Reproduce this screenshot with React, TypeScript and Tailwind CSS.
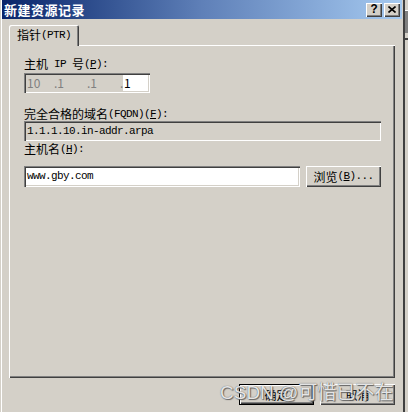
import React from "react";

const ui = { fontFamily: '"Noto Sans CJK SC", "Liberation Sans", sans-serif' };
const mono = { fontFamily: '"Liberation Mono", "Noto Sans CJK SC", monospace' };

// ascii part in a fixed-width face, like the old bitmap font
function A({ children }: { children: React.ReactNode }) {
  return (
    <span style={mono} className="text-[11px] tracking-[-0.6px] leading-none">
      {children}
    </span>
  );
}

function Mn({ c }: { c: string }) {
  // mnemonic letter with underline
  return <span className="underline underline-offset-[1px]">{c}</span>;
}

function Btn({ children, def = false, w = "w-[75px]" }: { children: React.ReactNode; def?: boolean; w?: string }) {
  return (
    <div
      className={
        w +
        " h-[21px] flex items-center justify-center text-[12px] leading-none text-black bg-[#d4d0c8] " +
        (def
          ? "shadow-[inset_1px_1px_0_#000,inset_-1px_-1px_0_#000,inset_2px_2px_0_#fff,inset_-2px_-2px_0_#404040,inset_-3px_-3px_0_#808080]"
          : "shadow-[inset_1px_1px_0_#fff,inset_-1px_-1px_0_#404040,inset_-2px_-2px_0_#808080]")
      }
    >
      {children}
    </div>
  );
}

export default function App() {
  const sunken =
    "shadow-[inset_1px_1px_0_#808080,inset_2px_2px_0_#404040,inset_-1px_-1px_0_#fff,inset_-2px_-2px_0_#d4d0c8]";
  const label = "h-[14px] flex items-center whitespace-nowrap leading-none";

  return (
    <div className="w-[408px] h-[412px] bg-[#d4d0c8] flex overflow-hidden relative" style={ui}>
      {/* Dialog */}
      <div className="w-[402px] h-full flex flex-col pl-[2px] shadow-[inset_1px_0_0_#d4d0c8,inset_2px_0_0_#fff]">
        {/* Title bar */}
        <div className="h-[19px] flex items-center justify-between bg-linear-to-r from-[#0a246a] via-[#5f80b8] to-[#a6caf0] pl-[2px] pr-[2px]">
          <span className="text-white font-bold text-[13px] leading-none tracking-[0.5px]">新建资源记录</span>
          <div className="flex gap-[2px]">
            <div className="w-[16px] h-[14px] flex items-center justify-center bg-[#d4d0c8] shadow-[inset_1px_1px_0_#fff,inset_-1px_-1px_0_#404040,inset_-2px_-2px_0_#808080] text-[12px] font-bold leading-none text-black" style={mono}>
              ?
            </div>
            <div className="w-[16px] h-[14px] flex items-center justify-center bg-[#d4d0c8] shadow-[inset_1px_1px_0_#fff,inset_-1px_-1px_0_#404040,inset_-2px_-2px_0_#808080]">
              <svg width="8" height="7" viewBox="0 0 8 7">
                <path d="M0.5 0.5 L7.5 6.5 M7.5 0.5 L0.5 6.5" stroke="#000" strokeWidth="1.6" />
              </svg>
            </div>
          </div>
        </div>

        {/* Body */}
        <div className="flex-1 flex flex-col px-[7px] pt-[6px]">
          {/* Tab */}
          <div className="relative z-10 w-[70px] h-[21px] bg-[#d4d0c8] rounded-t-[2px] shadow-[inset_1px_1px_0_#fff,inset_-1px_0_0_#404040,inset_-2px_0_0_#808080] flex items-center pl-[8px] pb-[1px] text-[12px] leading-none text-black whitespace-nowrap">
            指针<A>(PTR)</A>
          </div>

          {/* Panel */}
          <div className="-mt-[1px] w-[386px] h-[333px] flex flex-col pl-[15px] pt-[12px] shadow-[inset_1px_1px_0_#fff,inset_-1px_-1px_0_#404040,inset_-2px_-2px_0_#808080] text-[12px] text-black">
            <div className={label}>
              主机<A>&nbsp;IP&nbsp;</A>号<A>(<Mn c="P" />):</A>
            </div>
            <div className={"mt-[2px] w-[126px] h-[20px] bg-[#d4d0c8] flex items-center pl-[3px] pr-[2px] text-[12px] leading-none text-[#808080] " + sunken}>
              <span className="w-[25px]">10</span>
              <span className="w-[33px] pl-[2px]">.1</span>
              <span className="w-[33px] pl-[2px]">.1</span>
              <span className="w-[5px] pl-[2px]">.</span>
              <span className="ml-auto w-[25px] h-[16px] bg-white text-black flex items-center pl-[1px]">1</span>
            </div>

            <div className={"mt-[14px] " + label}>
              完全合格的域名<A>(FQDN)(<Mn c="F" />):</A>
            </div>
            <div className={"w-[357px] h-[20px] bg-[#d4d0c8] flex items-center pl-[3px] text-[11px] tracking-[-0.6px] leading-none " + sunken} style={mono}>
              1.1.1.10.in-addr.arpa
            </div>

            <div className={"mt-[1px] " + label}>
              主机名<A>(<Mn c="H" />):</A>
            </div>
            <div className="mt-[10px] flex gap-[6px]">
              <div className={"w-[276px] h-[21px] bg-white flex items-center pl-[3px] text-[11px] tracking-[-0.6px] leading-none " + sunken} style={mono}>
                www.gby.com
              </div>
              <Btn>
                浏览<A>(<Mn c="B" />)...</A>
              </Btn>
            </div>
          </div>

          {/* Bottom buttons */}
          <div className="mt-[6px] w-[386px] flex justify-end gap-[6px]">
            <Btn def>确定</Btn>
            <Btn>取消</Btn>
          </div>
        </div>
      </div>

      {/* Neighbouring window edge */}
      <div className="w-[1px] h-full bg-[#d4d0c8]" />
      <div className="w-[2px] h-full bg-[#404040]" />
      <div className="flex-1 h-full flex flex-col">
        <div className="h-[10px]" />
        <div className="h-[1px] bg-white" />
        <div className="h-[22px] bg-[#808080]" />
        <div className="h-[5px]" />
        <div className="h-[2px] bg-[#404040]" />
      </div>

      {/* Watermark */}
      <div
        className="absolute left-[220px] top-[382px] text-[19px] leading-[22px] whitespace-nowrap text-white/85 [text-shadow:0_0_1px_#444,1px_1px_1px_#666]"
        style={{ fontFamily: '"Liberation Sans", "Noto Sans CJK SC", sans-serif' }}
      >
        CSDN @可惜已不在
      </div>
    </div>
  );
}
